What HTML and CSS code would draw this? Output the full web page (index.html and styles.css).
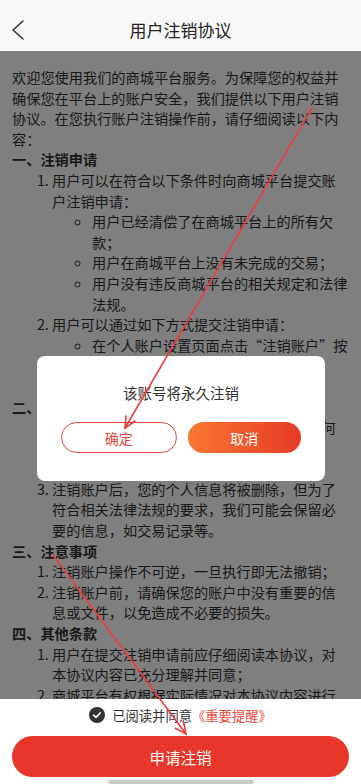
FILE: index.html
```html
<!DOCTYPE html>
<html lang="zh-CN">
<head>
<meta charset="utf-8">
<title>用户注销协议</title>
<link rel="stylesheet" href="styles.css">
</head>
<body>
<div class="page">
  <header class="header">
    <svg class="back" width="16" height="22" viewBox="0 0 16 22"><polyline points="12,2 2,11 12,20" fill="none" stroke="#333" stroke-width="1.6" stroke-linecap="round" stroke-linejoin="round"/></svg>
    <h1 class="title">用户注销协议</h1>
    <span class="spacer"></span>
  </header>

  <main class="content">
    <p class="para">欢迎您使用我们的商城平台服务。为保障您的权益并确保您在平台上的账户安全，我们提供以下用户注销协议。在您执行账户注销操作前，请仔细阅读以下内容：</p>
    <h2 class="section">一、注销申请</h2>
    <ol class="items">
      <li>用户可以在符合以下条件时向商城平台提交账户注销申请：
        <ul class="subitems">
          <li>用户已经清偿了在商城平台上的所有欠款；</li>
          <li>用户在商城平台上没有未完成的交易；</li>
          <li>用户没有违反商城平台的相关规定和法律法规。</li>
        </ul>
      </li>
      <li>用户可以通过如下方式提交注销申请：
        <ul class="subitems">
          <li>在个人账户设置页面点击“注销账户”按钮；</li>
          <li>联系客服人员进行注销申请。</li>
        </ul>
      </li>
    </ol>
    <h2 class="section">二、注销流程</h2>
    <ol class="items">
      <li>注销申请提交后，平台将进行审核，如有任何疑问将及时与您联系；</li>
      <li>审核通过后，账户将被注销；</li>
      <li>注销账户后，您的个人信息将被删除，但为了符合相关法律法规的要求，我们可能会保留必要的信息，如交易记录等。</li>
    </ol>
    <h2 class="section">三、注意事项</h2>
    <ol class="items">
      <li>注销账户操作不可逆，一旦执行即无法撤销；</li>
      <li>注销账户前，请确保您的账户中没有重要的信息或文件，以免造成不必要的损失。</li>
    </ol>
    <h2 class="section">四、其他条款</h2>
    <ol class="items">
      <li>用户在提交注销申请前应仔细阅读本协议，对本协议内容已充分理解并同意；</li>
      <li>商城平台有权根据实际情况对本协议内容进行修改和更新。</li>
    </ol>

    <div class="mask">
      <div class="dialog">
        <div class="dialog-title">该账号将永久注销</div>
        <div class="dialog-actions">
          <button class="btn-outline">确定</button>
          <button class="btn-fill">取消</button>
        </div>
      </div>
    </div>
  </main>

  <footer class="footer">
    <div class="agree">
      <svg class="check" width="16" height="16" viewBox="0 0 16 16"><circle cx="8" cy="8" r="8" fill="#333"/><polyline points="4.6,8.2 7,10.4 11.4,5.8" fill="none" stroke="#fff" stroke-width="1.6" stroke-linecap="round" stroke-linejoin="round"/></svg>
      <span class="agree-text">已阅读并同意</span><span class="agree-link">《重要提醒》</span>
    </div>
    <button class="submit">申请注销</button>
    <div class="indicator"></div>
  </footer>

  <svg class="annotations" width="361" height="784" viewBox="0 0 361 784">
    <g fill="none" stroke="#f03c3c" stroke-width="1.6" stroke-linecap="round">
      <line x1="312" y1="108" x2="125" y2="428"/>
      <polyline points="135,421 125,428 126,416"/>
      <line x1="53" y1="555" x2="186" y2="734"/>
      <polyline points="183.6,722 186,734 175.4,728.3"/>
    </g>
  </svg>
</div>
</body>
</html>
```

FILE: styles.css
```css
* { box-sizing: border-box; }

html, body {
  margin: 0;
  padding: 0;
}

body {
  width: 361px;
  height: 784px;
  overflow: hidden;
  font-family: "Noto Sans CJK SC", "Noto Sans", sans-serif;
  color: #333;
  background: #fff;
}

.page {
  position: relative;
  width: 361px;
  height: 784px;
  display: flex;
  flex-direction: column;
}

.header {
  height: 51px;
  flex: 0 0 51px;
  background: #f8f8f8;
  display: grid;
  grid-template-columns: 40px 1fr 40px;
  align-items: center;
  padding-top: 9px;
}

.back {
  margin-left: 11px;
}

.title {
  margin: 0;
  text-align: center;
  font-size: 17px;
  font-weight: 400;
  color: #222;
  line-height: 24px;
}

.content {
  position: relative;
  flex: 1 1 auto;
  overflow: hidden;
  padding: 16px 12px 0;
  font-size: 14.2px;
  line-height: 20.6px;
  color: #333;
  background: #fff;
}

.para,
.section,
.items,
.subitems {
  margin: 0;
}

.section {
  font-size: 14.2px;
  font-weight: 700;
  line-height: 20.6px;
}

.items,
.subitems {
  padding-left: 40px;
}

.subitems {
  list-style-type: circle;
}

.mask {
  position: absolute;
  inset: 0;
  background: rgba(0, 0, 0, 0.5);
  display: flex;
  justify-content: center;
  align-items: flex-start;
  padding-top: 305px;
}

.dialog {
  width: 288px;
  margin-left: 1px;
  background: #fff;
  border-radius: 8px;
  padding: 26px 24px 28px;
}

.dialog-title {
  margin-bottom: 18px;
  text-align: center;
  font-size: 14.5px;
  line-height: 22px;
  color: #333;
}

.dialog-actions {
  display: flex;
  gap: 11px;
}

.dialog-actions button {
  flex: 1 1 0;
  height: 31px;
  border-radius: 16px;
  font-family: inherit;
  font-size: 14px;
  padding: 0;
}

.btn-outline {
  background: #fff;
  border: 1px solid #e2473b;
  color: #e2473b;
}

.btn-fill {
  border: none;
  color: #fff;
  background: linear-gradient(90deg, #f7782f 0%, #e63a26 100%);
}

.footer {
  flex: 0 0 83px;
  background: #fff;
  padding-top: 7px;
  display: flex;
  flex-direction: column;
  align-items: center;
}

.agree {
  height: 18px;
  display: flex;
  align-items: center;
  font-size: 13.3px;
}

.check {
  margin-right: 7px;
}

.agree-text {
  color: #333;
}

.agree-link {
  color: #e8473b;
}

.submit {
  margin-top: 12px;
  width: 337px;
  height: 41px;
  border: none;
  border-radius: 21px;
  background: #e8372a;
  color: #fff;
  font-family: inherit;
  font-size: 15.5px;
}

.indicator {
  margin-top: 3px;
  width: 146px;
  height: 4px;
  border-radius: 2px;
  background: #c8c8c8;
}

.annotations {
  position: absolute;
  left: 0;
  top: 0;
  pointer-events: none;
}
```
